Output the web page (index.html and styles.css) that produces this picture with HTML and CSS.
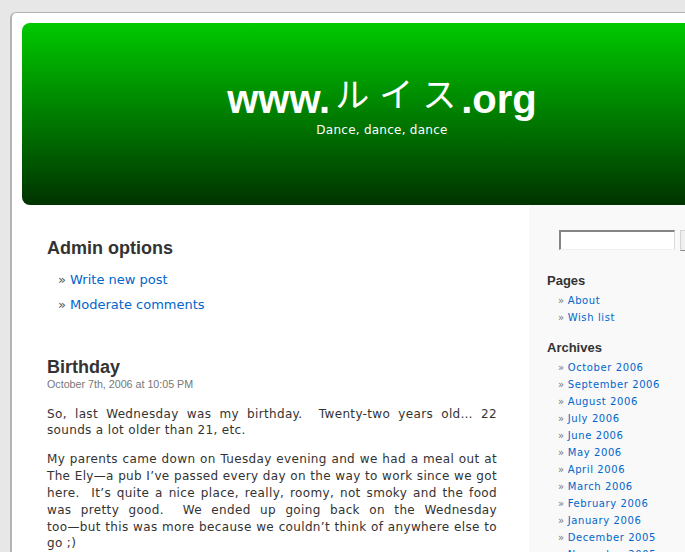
FILE: index.html
```html
<!DOCTYPE html>
<html lang="en">
<head>
<meta charset="utf-8">
<title>www.ルイス.org</title>
<link rel="stylesheet" href="styles.css">
</head>
<body>
<div class="page">
  <header class="header">
    <h1 class="title">www.<span class="kana">ルイス</span>.org</h1>
    <p class="tagline">Dance, dance, dance</p>
  </header>
  <div class="main">
    <div class="content">
      <h2 class="section-title">Admin options</h2>
      <ul class="admin-list">
        <li><a href="#">Write new post</a></li>
        <li><a href="#">Moderate comments</a></li>
      </ul>
      <div class="post">
        <h2 class="post-title">Birthday</h2>
        <div class="post-date">October 7th, 2006 at 10:05 PM</div>
        <div class="entry">
          <p>So, last Wednesday was my birthday.&nbsp; Twenty-two years old… 22 sounds a lot older than 21, etc.</p>
          <p>My parents came down on Tuesday evening and we had a meal out at The Ely—a pub I’ve passed every day on the way to work since we got here.&nbsp; It’s quite a nice place, really, roomy, not smoky and the food was pretty good.&nbsp; We ended up going back on the Wednesday <span class="nowrap">too—but</span> this was more because we couldn’t think of anywhere else to go ;)</p>
        </div>
      </div>
    </div>
    <aside class="sidebar">
      <form class="search">
        <input class="search-input" type="text">
        <button class="search-button" type="button">Search</button>
      </form>
      <h3 class="side-title">Pages</h3>
      <ul class="side-list">
        <li><a href="#">About</a></li>
        <li><a href="#">Wish list</a></li>
      </ul>
      <h3 class="side-title side-title-next">Archives</h3>
      <ul class="side-list">
        <li><a href="#">October 2006</a></li>
        <li><a href="#">September 2006</a></li>
        <li><a href="#">August 2006</a></li>
        <li><a href="#">July 2006</a></li>
        <li><a href="#">June 2006</a></li>
        <li><a href="#">May 2006</a></li>
        <li><a href="#">April 2006</a></li>
        <li><a href="#">March 2006</a></li>
        <li><a href="#">February 2006</a></li>
        <li><a href="#">January 2006</a></li>
        <li><a href="#">December 2005</a></li>
        <li><a href="#">November 2005</a></li>
        <li><a href="#">October 2005</a></li>
      </ul>
    </aside>
  </div>
</div>
</body>
</html>
```

FILE: styles.css
```css
html, body {
  overflow: hidden;
}

body {
  margin: 0;
  background: #e7e7e7;
  font-family: "DejaVu Sans", Verdana, sans-serif;
  color: #333;
}

a {
  color: #0066cc;
  text-decoration: none;
}

.page {
  margin: 12px 0 0 10px;
  width: 760px;
  min-height: 700px;
  background: #fff;
  border-left: 2px solid #b3b3b3;
  border-top: 1px solid #b3b3b3;
  border-top-left-radius: 6px;
  padding-top: 10px;
}

.header {
  margin-left: 10px;
  width: 720px;
  height: 182px;
  box-sizing: border-box;
  padding-top: 54px;
  border-radius: 8px;
  background: linear-gradient(#00c900, #003300);
  text-align: center;
  color: #fff;
}

.title {
  margin: 0;
  height: 44px;
  font: bold 40px/44px "Liberation Sans", Arial, sans-serif;
}

.kana {
  font-family: "Noto Sans CJK JP", sans-serif;
  font-weight: 400;
  font-size: 34px;
  line-height: 0;
  letter-spacing: 10px;
  padding-left: 5px;
  margin-right: -5px;
  vertical-align: 6px;
}

.tagline {
  margin: 1px 0 0;
  font-size: 12px;
  line-height: 16px;
  letter-spacing: 0.25px;
}

.main {
  display: flex;
}

.content {
  width: 450px;
  padding: 32px 32px 0 35px;
}

.section-title,
.post-title {
  margin: 0;
  font: bold 18px/22px "Liberation Sans", Arial, sans-serif;
  color: #333;
}

.admin-list {
  list-style: none;
  margin: 8px 0 0;
  padding: 0 0 0 11px;
  font-size: 13px;
  line-height: 25px;
}

.admin-list li::before {
  content: "» ";
  color: #555;
}

.post {
  margin-top: 39px;
}

.post-date {
  font: 10.7px/12px "Liberation Sans", Arial, sans-serif;
  color: #777;
}

.entry p {
  margin: 15.5px 0 0;
  font-size: 12px;
  line-height: 16.8px;
  letter-spacing: 0.34px;
  text-align: justify;
}

.entry p + p {
  margin-top: 12.3px;
}

.nowrap {
  white-space: nowrap;
}

.sidebar {
  flex: 1;
  background: #f9f9f9;
  padding: 25px 0 0 18px;
}

.search {
  display: flex;
  gap: 5px;
  margin: 0 0 0 12px;
}

.search-input {
  width: 116px;
  height: 20px;
  box-sizing: border-box;
  margin: 0;
  padding: 0;
  background: #fff;
  border-top: 2px solid #858585;
  border-left: 2px solid #858585;
  border-right: 1px solid #dcdcdc;
  border-bottom: 1px solid #f0f0f0;
}

.search-button {
  height: 21px;
  margin: 0;
  padding: 0 6px;
  background: #efefef;
  border: 1px solid #d4d4d4;
  border-bottom-color: #8a8a8a;
  font: 11px "DejaVu Sans", sans-serif;
  color: #333;
}

.side-title {
  margin: 21.5px 0 0;
  font: bold 13px/16px "Liberation Sans", Arial, sans-serif;
  color: #333;
}

.side-title-next {
  margin-top: 13.5px;
}

.side-list {
  list-style: none;
  margin: 3.5px 0 0;
  padding: 0 0 0 11px;
  font-size: 10px;
  line-height: 17px;
  letter-spacing: 0.6px;
}

.side-list li::before {
  content: "»";
  margin-right: 3px;
  color: #777;
}
```
